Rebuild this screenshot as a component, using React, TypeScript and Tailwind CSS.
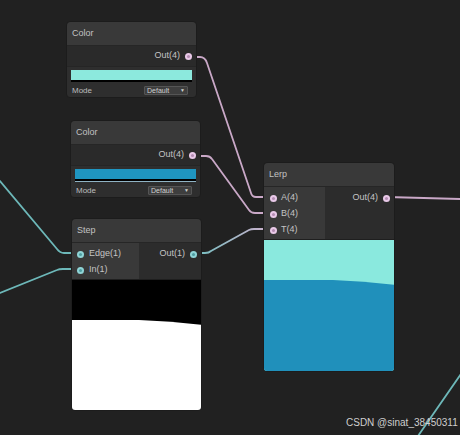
const font = { fontFamily: '"Liberation Sans", Arial, sans-serif' };

const Port = ({ kind }: { kind: "v4" | "v1" }) => (
  <div
    className={
      kind === "v4"
        ? "w-[7px] h-[7px] rounded-full bg-[#e9c9e8] flex items-center justify-center"
        : "w-[7px] h-[7px] rounded-full bg-[#8fd4d6] flex items-center justify-center"
    }
  >
    <div className={kind === "v4" ? "w-[3px] h-[3px] rounded-full bg-[#b48db3]" : "w-[3px] h-[3px] rounded-full bg-[#4f9ea1]"} />
  </div>
);

const Header = ({ title }: { title: string }) => (
  <div className="h-[24px] flex items-center px-[5px] bg-[#393939] border-b border-[#262626] rounded-t-[4px] text-[9px] text-[#c2c2c2]">
    {title}
  </div>
);

const ColorNode = ({ x, y, color, light }: { x: number; y: number; color: string; light?: boolean }) => (
  <div
    className="absolute w-[131px] rounded-[4px] bg-[#2e2e2e] border border-[#1c1c1c] overflow-hidden"
    style={{ left: x, top: y }}
  >
    <Header title="Color" />
    <div className="h-[21px] flex items-center justify-end pr-[4px] gap-[5px] text-[9px] text-[#c4c4c4] border-b border-[#252525] bg-[#2a2a2a]">
      <span>Out(4)</span>
      <Port kind="v4" />
    </div>
    <div className="px-[4px] pt-[3px] pb-[1px]">
      <div className="h-[10px]" style={{ background: color }} />
      <div className="h-[2px] bg-black" />
      {light && <div className="h-px bg-[#8fb3c4]" />}
      <div className="flex items-center justify-between mt-[3px] h-[11px]">
        <span className="text-[8px] text-[#bdbdbd] pl-px">Mode</span>
        <div className="w-[44px] h-[9px] mr-[4px] bg-[#3e3e3e] border border-[#555] rounded-[1px] flex items-center justify-between px-[2px] text-[7px] leading-none text-[#d0d0d0]">
          <span>Default</span>
          <span className="text-[5px]">▼</span>
        </div>
      </div>
    </div>
  </div>
);

export default function App() {
  return (
    <div className="relative w-[460px] h-[435px] bg-[#212121] overflow-hidden" style={font}>
      <svg className="absolute inset-0" width="460" height="435" viewBox="0 0 460 435">
        <defs>
          <linearGradient id="mix" x1="194" y1="253" x2="272" y2="229" gradientUnits="userSpaceOnUse">
            <stop offset="0" stopColor="#74bfc0" />
            <stop offset="1" stopColor="#cfb0cd" />
          </linearGradient>
        </defs>
        <g fill="none" strokeWidth="1.8" strokeLinecap="round" strokeLinejoin="round">
          <path d="M189 57 H200 Q205 57 207 63 L251 193 Q252 197 256 197 H272" stroke="#c9a8c7" />
          <path d="M193 156 H206 Q210 156 212 159 L249 210 Q251 213 255 213 H272" stroke="#c9a8c7" />
          <path d="M194 253 H205 Q209 253 211 251 L249 230 Q251 229 254 229 H272" stroke="url(#mix)" />
          <path d="M387 197 L460 199" stroke="#c9a8c7" />
          <path d="M0 181 L57 249 Q60 253 64 253 H79" stroke="#6db8b9" />
          <path d="M0 293 L57 270 Q59 269 63 269 H79" stroke="#6db8b9" />
          <path d="M461 374 L418 436" stroke="#6db8b9" />
        </g>
      </svg>

      <ColorNode x={66} y={21} color="#8ce9dd" />
      <ColorNode x={70} y={120} color="#1f95c0" light />

      {/* Step */}
      <div className="absolute left-[71px] top-[218px] w-[131px] rounded-[4px] bg-[#2c2c2c] border border-[#1c1c1c] overflow-hidden">
        <Header title="Step" />
        <div className="flex h-[37px] border-b border-[#1f1f1f]">
          <div className="w-[67px] bg-[#393939] pt-[3px] text-[9px] text-[#c4c4c4]">
            <div className="h-[16px] flex items-center pl-[5px] gap-[5px]">
              <Port kind="v1" />
              <span>Edge(1)</span>
            </div>
            <div className="h-[16px] flex items-center pl-[5px] gap-[5px]">
              <Port kind="v1" />
              <span>In(1)</span>
            </div>
          </div>
          <div className="flex-1 pt-[3px] text-[9px] text-[#c4c4c4]">
            <div className="h-[16px] flex items-center justify-end pr-[4px] gap-[5px]">
              <span>Out(1)</span>
              <Port kind="v1" />
            </div>
          </div>
        </div>
        <svg className="block" width="131" height="130" viewBox="0 0 131 130">
          <rect width="131" height="130" fill="#000" />
          <path d="M0 40 H67 Q100 41 131 45 V130 H0 Z" fill="#fff" />
        </svg>
      </div>

      {/* Lerp */}
      <div className="absolute left-[263px] top-[162px] w-[132px] rounded-[4px] bg-[#2c2c2c] border border-[#1c1c1c] overflow-hidden">
        <Header title="Lerp" />
        <div className="flex h-[53px] border-b border-[#1f1f1f]">
          <div className="w-[61px] bg-[#393939] pt-[3px] text-[9px] text-[#c4c4c4]">
            {["A(4)", "B(4)", "T(4)"].map((l) => (
              <div key={l} className="h-[16px] flex items-center pl-[6px] gap-[4px]">
                <Port kind="v4" />
                <span>{l}</span>
              </div>
            ))}
          </div>
          <div className="flex-1 pt-[3px] text-[9px] text-[#c4c4c4]">
            <div className="h-[16px] flex items-center justify-end pr-[4px] gap-[5px]">
              <span>Out(4)</span>
              <Port kind="v4" />
            </div>
          </div>
        </div>
        <svg className="block" width="132" height="131" viewBox="0 0 132 131">
          <rect width="132" height="131" fill="#8ae9de" />
          <path d="M0 40 H69 Q100 41 132 45 V131 H0 Z" fill="#2090bb" />
        </svg>
      </div>

      <div className="absolute left-[346px] top-[415px] text-[10px] text-[#cfcfcf] whitespace-nowrap">
        CSDN @sinat_38450311
      </div>
    </div>
  );
}
